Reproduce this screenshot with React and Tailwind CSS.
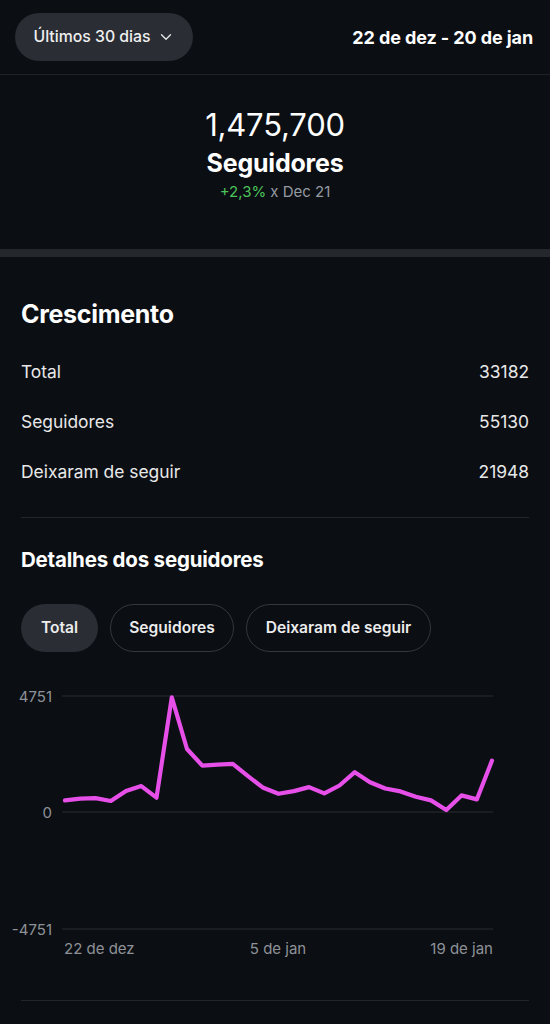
import React from "react";
import { ChevronDown } from "lucide-react";

const ys = [800.4, 798.7, 798.1, 801, 791.1, 786.1, 797.7, 697.3, 749, 765.6, 764.6, 763.9, 776.2, 787.8, 793.8, 791.1, 787.1, 793.4, 785.5, 772.2, 782.2, 788.5, 791.4, 796.7, 800.4, 810, 795.4, 799.4, 760.6];

function Chart() {
  const pts = ys
    .map((y, i) => `${(65 + (i * 427) / 28).toFixed(1)},${(y - 680).toFixed(1)}`)
    .join(" ");
  const label = { fontFamily: "Inter, 'Liberation Sans', sans-serif", fontSize: 15, fill: "#8e9298" };
  return (
    <svg width="550" height="300" viewBox="0 0 550 300" className="block">
      <line x1="62" y1="16" x2="493" y2="16" stroke="#2a2e34" strokeWidth="1" />
      <line x1="62" y1="132" x2="493" y2="132" stroke="#2a2e34" strokeWidth="1" />
      <line x1="62" y1="249" x2="493" y2="249" stroke="#2a2e34" strokeWidth="1" />
      <text x="52" y="16" textAnchor="end" dominantBaseline="central" style={label}>4751</text>
      <text x="52" y="132" textAnchor="end" dominantBaseline="central" style={label}>0</text>
      <text x="52" y="249" textAnchor="end" dominantBaseline="central" style={label}>-4751</text>
      <text x="64" y="268" dominantBaseline="central" style={label}>22 de dez</text>
      <text x="278" y="268" textAnchor="middle" dominantBaseline="central" style={label}>5 de jan</text>
      <text x="493" y="268" textAnchor="end" dominantBaseline="central" style={label}>19 de jan</text>
      <polyline points={pts} fill="none" stroke="#e64fe8" strokeWidth="4.2" strokeLinejoin="round" strokeLinecap="round" />
    </svg>
  );
}

export default function App() {
  return (
    <div
      className="w-[550px] min-h-[1024px] bg-[#0b0e13] text-white"
      style={{ fontFamily: "Inter, 'Liberation Sans', sans-serif" }}
    >
      <header className="h-[75px] flex items-center justify-between pl-[15px] pr-[17px] border-b border-[#1e2227]">
        <button className="h-[48px] w-[178px] rounded-full bg-[#2a2d34] flex items-center justify-center gap-[6px] text-[15.8px] font-medium text-[#f0f0f0]">
          <span>Últimos 30 dias</span>
          <ChevronDown size={18} strokeWidth={1.8} className="text-[#e6e6e6]" />
        </button>
        <div className="text-[18px] font-bold tracking-[-0.1px]">22 de dez - 20 de jan</div>
      </header>

      <section className="flex flex-col items-center pt-[32px] pb-[47px]">
        <div className="text-[31px] leading-[36px] font-normal tracking-[-0.2px]">1,475,700</div>
        <div className="mt-[5px] text-[25px] leading-[30px] font-bold tracking-[-0.2px]">Seguidores</div>
        <div className="mt-[4px] text-[15px] leading-[20px]">
          <span className="text-[#4cc35a]">+2,3%</span>
          <span className="text-[#959aa1]"> x Dec 21</span>
        </div>
      </section>

      <div className="h-[8px] bg-[#24282d]" />

      <section className="px-[21px]">
        <h2 className="pt-[42px] text-[25px] leading-[30px] font-bold tracking-[-0.3px]">Crescimento</h2>
        <div className="mt-[18px] flex flex-col text-[17.4px] text-[#e8e8e8]">
          <div className="h-[50px] flex items-center justify-between">
            <span>Total</span>
            <span>33182</span>
          </div>
          <div className="h-[50px] flex items-center justify-between">
            <span>Seguidores</span>
            <span>55130</span>
          </div>
          <div className="h-[50px] flex items-center justify-between">
            <span>Deixaram de seguir</span>
            <span>21948</span>
          </div>
        </div>
        <div className="mt-[20px] h-px bg-[#23272c]" />
        <h3 className="mt-[29px] text-[20.5px] leading-[26px] font-bold tracking-[-0.2px]">Detalhes dos seguidores</h3>
        <div className="mt-[31px] flex gap-[12px] text-[15.6px] font-semibold text-[#ececec]">
          <div className="h-[48px] w-[77px] rounded-full bg-[#2a2d34] flex items-center justify-center">Total</div>
          <div className="h-[48px] w-[124px] rounded-full border border-[#34383e] flex items-center justify-center">Seguidores</div>
          <div className="h-[48px] w-[185px] rounded-full border border-[#34383e] flex items-center justify-center">Deixaram de seguir</div>
        </div>
      </section>

      <div className="mt-[28px]">
        <Chart />
      </div>

      <div className="mx-[21px] mt-[20px] h-px bg-[#23272c]" />
    </div>
  );
}
